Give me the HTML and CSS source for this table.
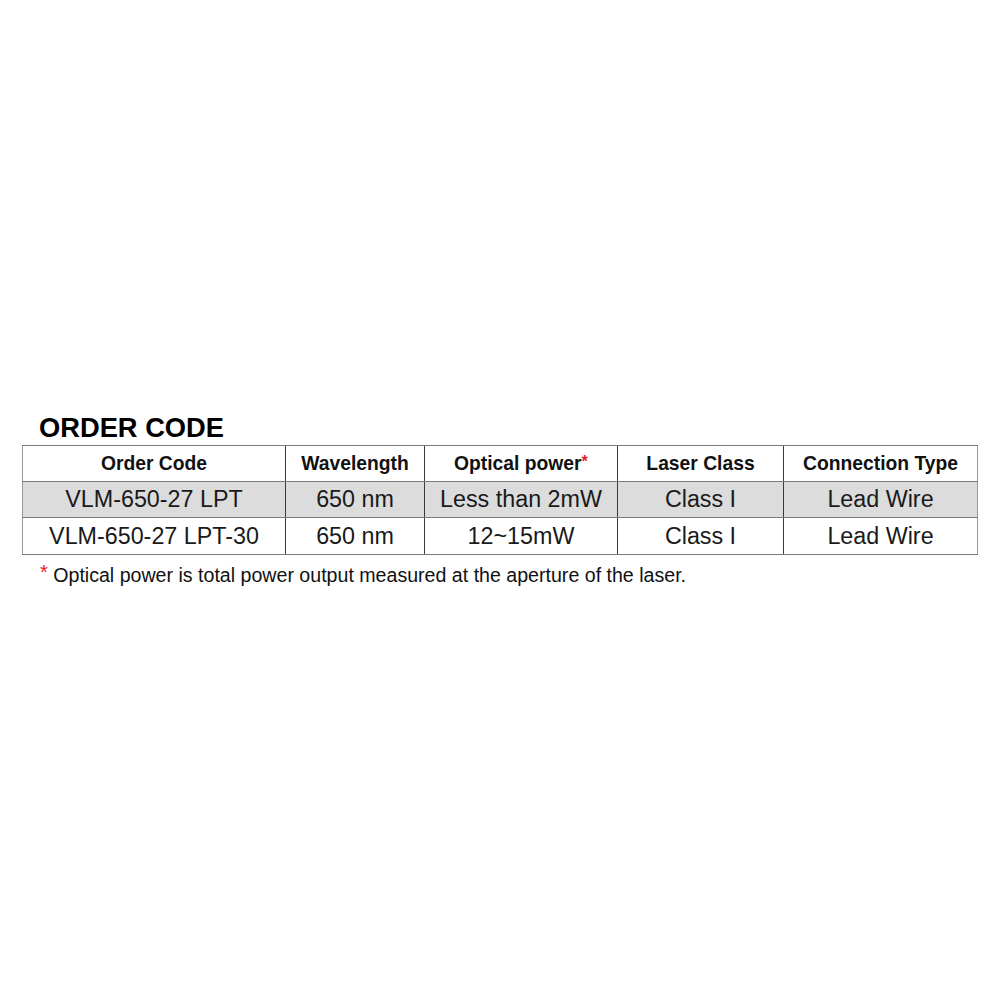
FILE: index.html
```html
<!DOCTYPE html>
<html>
<head>
<meta charset="utf-8">
<link rel="stylesheet" href="styles.css">
</head>
<body>
<div class="page">
  <h1 class="title">ORDER CODE</h1>
  <table class="spec">
    <colgroup>
      <col class="c1"><col class="c2"><col class="c3"><col class="c4"><col class="c5">
    </colgroup>
    <thead>
      <tr>
        <th>Order Code</th>
        <th>Wavelength</th>
        <th>Optical power<span class="star">*</span></th>
        <th>Laser Class</th>
        <th>Connection Type</th>
      </tr>
    </thead>
    <tbody>
      <tr class="shade">
        <td>VLM-650-27 LPT</td>
        <td>650 nm</td>
        <td>Less than 2mW</td>
        <td>Class I</td>
        <td>Lead Wire</td>
      </tr>
      <tr>
        <td>VLM-650-27 LPT-30</td>
        <td>650 nm</td>
        <td>12~15mW</td>
        <td>Class I</td>
        <td>Lead Wire</td>
      </tr>
    </tbody>
  </table>
  <p class="note"><span class="star">*</span> Optical power is total power output measured at the aperture of the laser.</p>
</div>
</body>
</html>
```
FILE: styles.css
```css
html, body {
  margin: 0;
  padding: 0;
  background: #ffffff;
}
.page {
  padding-top: 414px;
  font-family: "Liberation Sans", Arial, sans-serif;
  color: #000;
}
.title {
  margin: 0 0 3px 0;
  padding-left: 39px;
  font-size: 27.3px;
  line-height: 28px;
  font-weight: bold;
}
.spec {
  margin-left: 22px;
  border-collapse: collapse;
  table-layout: fixed;
  width: 956px;
  border-top: 1px solid #8a8a8a;
  border-bottom: 1px solid #8a8a8a;
  border-left: 1px solid #9a9a9a;
  border-right: 1px solid #9a9a9a;
}
.c1 { width: 263px; }
.c2 { width: 139px; }
.c3 { width: 193px; }
.c4 { width: 166px; }
.c5 { width: 194px; }
.spec th, .spec td {
  padding: 0;
  text-align: center;
  border-left: 1px solid #3a3a3a;
  border-top: 1px solid #7a7a7a;
  border-bottom: 1px solid #7a7a7a;
}
.spec th:first-child, .spec td:first-child {
  border-left: 1px solid #9a9a9a;
}
.spec th {
  height: 35px;
  font-size: 19.3px;
  font-weight: bold;
  color: #111;
}
.spec td {
  height: 35px;
  font-size: 23.3px;
  color: #1a1a1a;
}
.spec tbody tr:last-child td {
  height: 36px;
}
.shade td {
  background: #dcdcdc;
}
.star {
  color: #e8202a;
  vertical-align: 3px;
  font-size: 0.85em;
}
.note {
  margin: 5px 0 0 40px;
  font-size: 19.6px;
  line-height: 24px;
  color: #111;
}
.note .star {
  font-size: 20px;
  vertical-align: 3px;
}
```
